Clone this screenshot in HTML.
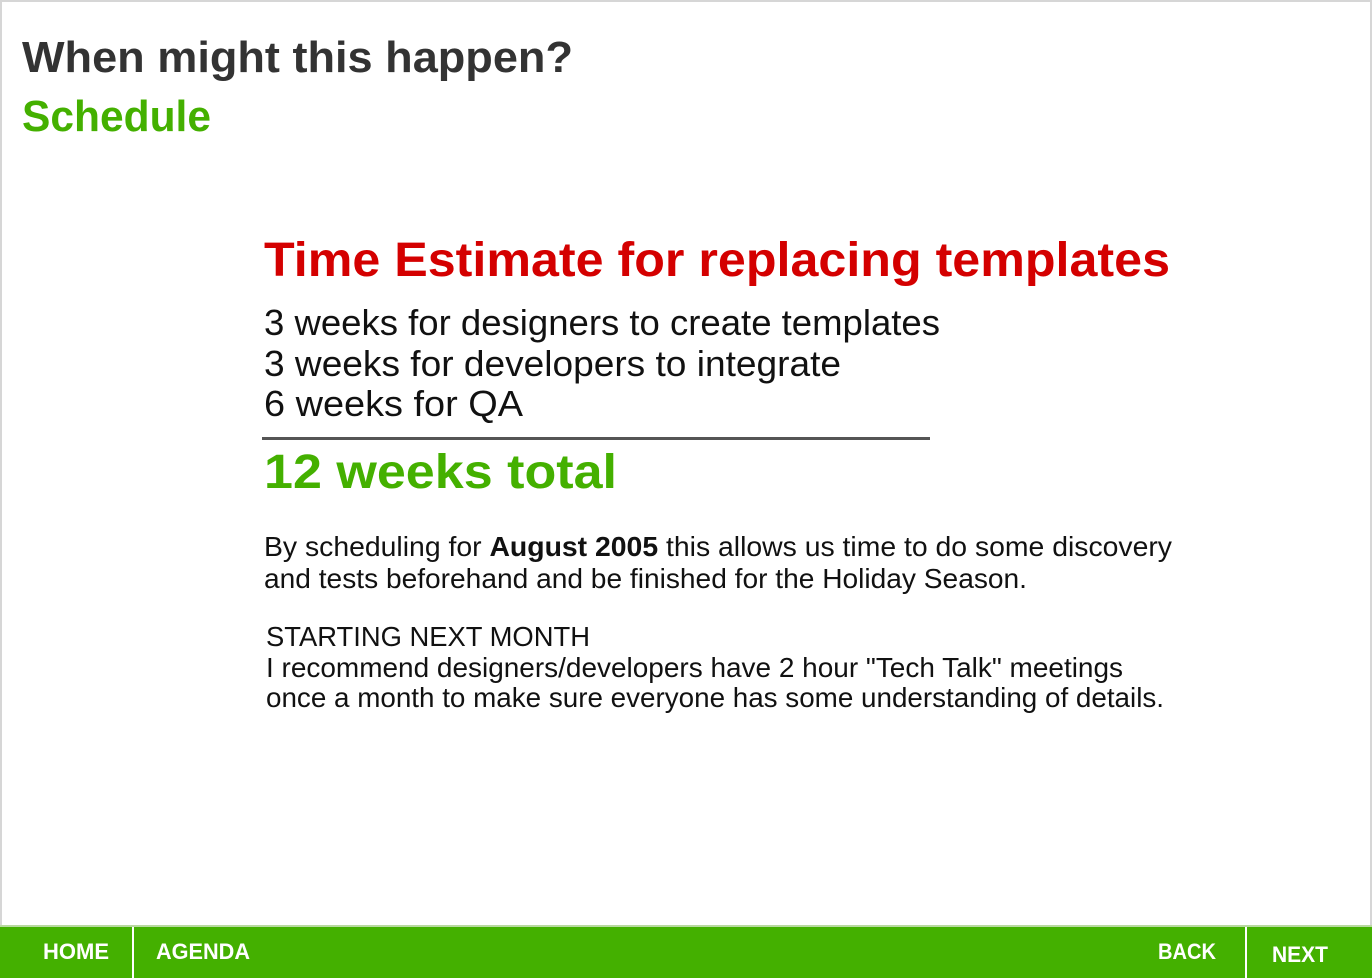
<!DOCTYPE html>
<html><head><meta charset="utf-8"><style>
html,body{margin:0;padding:0;width:1372px;height:978px;overflow:hidden;background:#fff}
svg{display:block}
</style></head><body>
<svg width="1372" height="978" viewBox="0 0 1372 978" xmlns="http://www.w3.org/2000/svg" font-family="Liberation Sans, sans-serif">
<rect x="0" y="0" width="1372" height="978" fill="#fff"/>
<rect x="0" y="0" width="1372" height="2" fill="#d6d6d6"/>
<rect x="0" y="0" width="2" height="926" fill="#d6d6d6"/>
<rect x="1370" y="0" width="2" height="926" fill="#d6d6d6"/>
<text x="22" y="72" font-size="44" font-weight="bold" fill="#333" textLength="551" lengthAdjust="spacingAndGlyphs">When might this happen?</text>
<text x="22" y="131" font-size="44" font-weight="bold" fill="#44b000" textLength="189" lengthAdjust="spacingAndGlyphs">Schedule</text>
<text x="264" y="276" font-size="48" font-weight="bold" fill="#d40000" textLength="906" lengthAdjust="spacingAndGlyphs">Time Estimate for replacing templates</text>
<text x="264" y="335" font-size="36" fill="#111" textLength="676" lengthAdjust="spacingAndGlyphs">3 weeks for designers to create templates</text>
<text x="264" y="376" font-size="36" fill="#111" textLength="577" lengthAdjust="spacingAndGlyphs">3 weeks for developers to integrate</text>
<text x="264" y="416" font-size="36" fill="#111" textLength="259" lengthAdjust="spacingAndGlyphs">6 weeks for QA</text>
<rect x="262" y="437" width="668" height="3" fill="#555"/>
<text x="264" y="488" font-size="48" font-weight="bold" fill="#44b000" textLength="353" lengthAdjust="spacingAndGlyphs">12 weeks total</text>
<text x="264" y="556" font-size="28" fill="#111" textLength="908" lengthAdjust="spacingAndGlyphs">By scheduling for <tspan font-weight="bold">August 2005</tspan> this allows us time to do some discovery</text>
<text x="264" y="588" font-size="28" fill="#111" textLength="763" lengthAdjust="spacingAndGlyphs">and tests beforehand and be finished for the Holiday Season.</text>
<text x="266" y="646" font-size="28" fill="#111" textLength="324" lengthAdjust="spacingAndGlyphs">STARTING NEXT MONTH</text>
<text x="266" y="677" font-size="28" fill="#111" textLength="857" lengthAdjust="spacingAndGlyphs">I recommend designers/developers have 2 hour "Tech Talk" meetings</text>
<text x="266" y="707" font-size="28" fill="#111" textLength="898" lengthAdjust="spacingAndGlyphs">once a month to make sure everyone has some understanding of details.</text>
<rect x="0" y="925" width="1372" height="2" fill="#b8d9a0"/>
<rect x="0" y="927" width="1372" height="51" fill="#44b000"/>
<rect x="132" y="927" width="2" height="51" fill="#fff"/>
<rect x="1245" y="927" width="2" height="51" fill="#fff"/>
<text x="43" y="959" font-size="22" font-weight="bold" fill="#fff" textLength="66" lengthAdjust="spacingAndGlyphs">HOME</text>
<text x="156" y="959" font-size="22" font-weight="bold" fill="#fff" textLength="94" lengthAdjust="spacingAndGlyphs">AGENDA</text>
<text x="1158" y="959" font-size="22" font-weight="bold" fill="#fff" textLength="58" lengthAdjust="spacingAndGlyphs">BACK</text>
<text x="1272" y="962" font-size="22" font-weight="bold" fill="#fff" textLength="56" lengthAdjust="spacingAndGlyphs">NEXT</text>
</svg>
</body></html>
